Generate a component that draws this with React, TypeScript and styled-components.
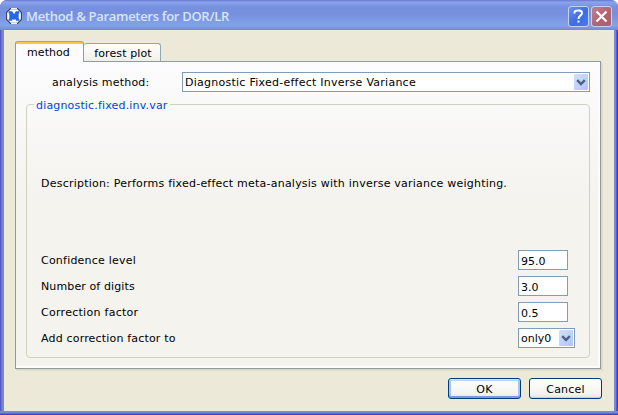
import React from "react";
import styled, { createGlobalStyle } from "styled-components";

const Global = createGlobalStyle`
  * { box-sizing: border-box; }
  html, body { margin: 0; padding: 0; }
  body {
    background: #fff;
    color: #000;
    font: 11px/14px "DejaVu Sans", Verdana, sans-serif;
    overflow: hidden;
  }
`;

const Window = styled.div`
  width: 618px;
  height: 415px;
  display: flex;
  flex-direction: column;
  border-radius: 7px 7px 0 0;
  overflow: hidden;
  background: linear-gradient(90deg, #5259c3 0 1px, #6877d6 1px 2px, #7688db 2px 616px, #565dcb 616px 617px, #3a40b4 617px);
`;

const TitleBar = styled.header`
  height: 30px;
  flex: none;
  display: flex;
  align-items: center;
  padding: 2px 6px 0;
  background: linear-gradient(
    #6674ce 0, #8ba4ec 2px, #839ce8 4px, #7891df 7px, #7690de 14px,
    #7e9ee6 22px, #80a3e9 26px, #7a94e0 28px, #7387d5 30px
  );
`;

const Title = styled.h1`
  flex: 1;
  margin: 0 0 0 4px;
  color: #d8e4f8;
  font: 600 13px/18px "Open Sans", "Noto Sans", sans-serif;
  white-space: nowrap;
  letter-spacing: -0.3px;
`;

const CaptionButton = styled.button<{ $close?: boolean }>`
  width: 21px;
  height: 21px;
  margin-left: 2px;
  padding: 0;
  display: grid;
  place-items: center;
  border: 1px solid #c4d1f5;
  border-radius: 3px;
  background: ${(p) =>
    p.$close
      ? "linear-gradient(135deg, #bd8390, #b4636f 55%, #a9606e)"
      : "linear-gradient(135deg, #6c8ff0, #3e6ce6 55%, #477cf0)"};
`;

const Client = styled.main`
  height: 381px;
  margin: 0 4px;
  padding: 11px 12px 0 11px;
  background: #ece9d8;
`;

const BottomFrame = styled.div`
  height: 4px;
  background: linear-gradient(#7688db 0 2px, #5b67cc 2px 3px, #3f46b6 3px);
`;

const TabBar = styled.div`
  height: 21px;
  display: flex;
  align-items: flex-end;
  position: relative;
  z-index: 1;
`;

const Tab = styled.div<{ $active?: boolean }>`
  width: ${(p) => (p.$active ? 69 : 77)}px;
  height: ${(p) => (p.$active ? 21 : 18)}px;
  margin-bottom: ${(p) => (p.$active ? 0 : 1)}px;
  padding-top: ${(p) => (p.$active ? 4 : 3)}px;
  padding-right: ${(p) => (p.$active ? 2 : 0)}px;
  padding-left: ${(p) => (p.$active ? 0 : 2)}px;
  text-align: center;
  letter-spacing: ${(p) => (p.$active ? 0.05 : 0.1)}px;
  border: 1px solid #919b9c;
  border-bottom: 0;
  border-left-width: ${(p) => (p.$active ? 1 : 0)}px;
  border-radius: 3px 3px 0 0;
  ${(p) =>
    p.$active
      ? "border-top-color: #e5972d; background: linear-gradient(#ffc73c 0 2px, #fcfcfe 2px);"
      : "border-color: #91a7b4; background: linear-gradient(#fefefe, #f0f0ea);"}
`;

const Page = styled.section`
  height: 308px;
  width: 586px;
  margin-top: -1px;
  padding: 10px;
  border: 1px solid #919b9c;
  background: linear-gradient(#fcfcfe, #f4f3ee 45%, #f4f3ee);
  box-shadow: inset -2px -2px #fcfcfb, 1px 1px #d9d6c6, 2px 2px #e3e0cf;
`;

const MethodRow = styled.div`
  display: flex;
  align-items: center;
  height: 20px;
  margin-left: 26px;
`;

const MethodLabel = styled.label`
  width: 130px;
  padding-top: 2px;
  letter-spacing: 0.2px;
`;

const Select = styled.div<{ $width: number }>`
  width: ${(p) => p.$width}px;
  height: 20px;
  display: flex;
  align-items: center;
  justify-content: space-between;
  padding: 0 1px 0 2px;
  border: 1px solid #7f9db9;
  background: #fff;
  white-space: nowrap;
`;

const DropButton = styled.span`
  width: 14px;
  height: 16px;
  flex: none;
  display: grid;
  place-items: center;
  border-radius: 1px;
  background: linear-gradient(135deg, #d3e0fd, #bdd0fa 60%, #adc4f5);
`;

const Group = styled.fieldset`
  width: 564px;
  height: 260px;
  margin: 6px 0 0;
  padding: 0 14px;
  border: 1px solid #d0d0bf;
  border-radius: 4px;
`;

const Legend = styled.legend`
  height: 13px;
  line-height: 15px;
  margin-left: -7px;
  padding: 0 2px;
  color: #0046d5;
  white-space: nowrap;
  letter-spacing: 0.17px;
`;

const Description = styled.p`
  height: 14px;
  margin: 66px 0 59px;
  white-space: nowrap;
  letter-spacing: 0.225px;
`;

const Fields = styled.div`
  display: grid;
  grid-template-columns: 477px 57px;
  grid-auto-rows: 20px;
  row-gap: 6px;
  align-items: center;
`;

const FieldLabel = styled.label<{ $tracking: number }>`
  padding-top: 2px;
  letter-spacing: ${(p) => p.$tracking}px;
`;

const Field = styled.input`
  width: 50px;
  height: 20px;
  padding: 2px 2px 0;
  border: 1px solid #7f9db9;
  background: #fff;
  font: inherit;
  outline: none;
`;

const Value = styled.span<{ $tracking: number }>`
  padding-top: 1px;
  letter-spacing: ${(p) => p.$tracking}px;
`;

const Actions = styled.footer`
  display: flex;
  justify-content: flex-end;
  gap: 8px;
  margin-top: 9px;
`;

const Button = styled.button<{ $primary?: boolean }>`
  width: 73px;
  height: 21px;
  padding: 2px 0 0;
  border: 1px solid #003c74;
  border-radius: 3px;
  background: linear-gradient(#fff, #f3f3ef 80%, #e4e0d5);
  box-shadow: ${(p) =>
    p.$primary
      ? "inset 0 1px #cee7ff, inset 0 -2px #7c98e8, inset 2px 0 #a9c2f3, inset -2px 0 #a9c2f3, inset 0 2px #bcd4f6"
      : "inset 0 -1px #d6d0c5"};
  color: #000;
  font: inherit;
  letter-spacing: 0.2px;
`;

const Arrow = () => (
  <DropButton>
    <svg width="10" height="7" viewBox="0 0 10 7" fill="none">
      <path d="M1.2 1.2 5 5 8.8 1.2" stroke="#4d6185" strokeWidth="2.4" />
    </svg>
  </DropButton>
);

const AppIcon = () => (
  <svg width="16" height="16" viewBox="0 0 16 16">
    <path d="M4.5.6h7L15.4 4.5v7l-3.9 3.9h-7L.6 11.5v-7z" fill="#fff" stroke="#35415c" strokeWidth="1.1" />
    <path d="M5 .5h6M5 15.5h6" stroke="#eef2fb" />
    <path d="M2.6 3.2h3.6L8 6.2l1.8-3h3.6v2.2h-.7v5.4h.7v2H9.8v-1.6L8 11.8l-1.8-.6v1.6H2.6v-2h.7V5.4h-.7z" fill="#2467ed" />
  </svg>
);

export default function App() {
  return (
    <>
      <Global />
      <Window>
        <TitleBar>
          <AppIcon />
          <Title>Method &amp; Parameters for DOR/LR</Title>
          <CaptionButton aria-label="Help">
            <svg width="15" height="17" viewBox="0 0 15 17" fill="none">
              <path d="M3.5 5.5V4.2Q4 2.5 7 2.5h1q3 0 3 2.6 0 1.5-2 2.8Q7.5 9 7.5 11" stroke="#fff" strokeWidth="2" />
              <path d="M6.5 12.5h2v2h-2z" fill="#fff" />
            </svg>
          </CaptionButton>
          <CaptionButton $close aria-label="Close">
            <svg width="13" height="13" viewBox="0 0 13 13">
              <path d="m1.5 1.5 10 10m0-10-10 10" stroke="#fff" strokeWidth="2.2" />
            </svg>
          </CaptionButton>
        </TitleBar>
        <Client>
          <TabBar>
            <Tab $active>method</Tab>
            <Tab>forest plot</Tab>
          </TabBar>
          <Page>
            <MethodRow>
              <MethodLabel>analysis method:</MethodLabel>
              <Select $width={408}>
                <Value $tracking={0.255}>Diagnostic Fixed-effect Inverse Variance</Value>
                <Arrow />
              </Select>
            </MethodRow>
            <Group>
              <Legend>diagnostic.fixed.inv.var</Legend>
              <Description>
                Description: Performs fixed-effect meta-analysis with inverse variance weighting.
              </Description>
              <Fields>
                <FieldLabel $tracking={0.22}>Confidence level</FieldLabel>
                <Field defaultValue="95.0" />
                <FieldLabel $tracking={0.12}>Number of digits</FieldLabel>
                <Field defaultValue="3.0" />
                <FieldLabel $tracking={0.28}>Correction factor</FieldLabel>
                <Field defaultValue="0.5" />
                <FieldLabel $tracking={0.18}>Add correction factor to</FieldLabel>
                <Select $width={57}>
                  <Value $tracking={0}>only0</Value>
                  <Arrow />
                </Select>
              </Fields>
            </Group>
          </Page>
          <Actions>
            <Button $primary>OK</Button>
            <Button>Cancel</Button>
          </Actions>
        </Client>
        <BottomFrame />
      </Window>
    </>
  );
}
